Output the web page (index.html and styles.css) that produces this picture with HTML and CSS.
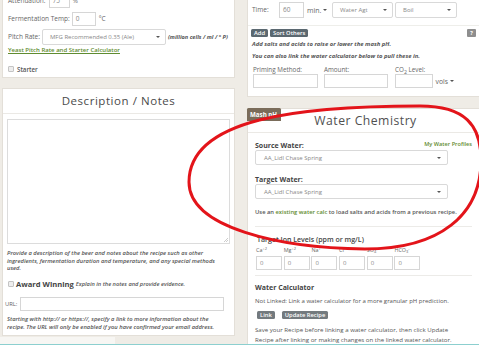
FILE: index.html
```html
<!DOCTYPE html>
<html lang="en">
<head>
<meta charset="utf-8">
<title>Recipe Editor</title>
<link rel="stylesheet" href="styles.css">
</head>
<body>
<div class="page">
  <div class="cols">
    <div class="col left">
      <section class="panel ferment">
        <div class="row r1"><span class="lbl">Attenuation:</span><span class="inp w21">75</span><span class="lbl">%</span></div>
        <div class="row r2"><span class="lbl">Fermentation Temp:</span><span class="inp w24">0</span><span class="lbl">°C</span></div>
        <div class="row r3"><span class="lbl">Pitch Rate:</span><span class="sel w124"><span>MFG Recommended 0.35 (Ale)</span><i class="caret"></i></span><em class="unit">(million cells / ml / ° P)</em></div>
        <a class="glink calc">Yeast Pitch Rate and Starter Calculator</a>
        <div class="check starter"><span class="box"></span><span>Starter</span></div>
      </section>
      <section class="panel desc">
        <h2 class="ph">Description / Notes</h2>
        <div class="pbody">
          <div class="textarea"><svg class="grip" width="5" height="5" viewBox="0 0 5 5"><path d="M1 5 L5 1 M3 5 L5 3" stroke="#aaa" stroke-width="0.6" fill="none"/></svg></div>
          <p class="help h1">Provide a description of the beer and notes about the recipe such as other<br>ingredients, fermentation duration and temperature, and any special methods<br>used.</p>
          <div class="award"><span class="box"></span><strong>Award Winning</strong><em>Explain in the notes and provide evidence.</em></div>
          <div class="urlrow"><span class="lbl">URL:</span><span class="inp url"></span></div>
          <p class="help h2">Starting with http:// or https://, specify a link to more information about the<br>recipe. The URL will only be enabled if you have confirmed your email address.</p>
        </div>
      </section>
      <div class="stub"></div>
    </div>
    <div class="col right">
      <section class="panel misc">
        <div class="row time">
          <span class="lbl tl">Time:</span><span class="inp w25">60</span><span class="drop min">min.<i class="caret"></i></span>
          <span class="sel w61"><span>Water Agt</span><i class="caret"></i></span>
          <span class="sel w62"><span>Boil</span><i class="caret"></i></span>
        </div>
        <div class="sep"></div>
        <div class="row btns">
          <span class="btn dark">Add</span><span class="btn dark">Sort Others</span><span class="qm">?</span>
        </div>
        <p class="note">Add salts and acids to raise or lower the mash pH.<br>You can also link the water calculator below to pull these in.</p>
        <div class="prime">
          <span class="lbl">Priming Method:</span><span class="lbl">Amount:</span><span class="lbl">CO<sub>2</sub> Level:</span>
          <span class="inp"></span><span class="inp"></span><span class="co2"><span class="inp w39"></span><span class="drop">vols<i class="caret"></i></span></span>
        </div>
      </section>
      <section class="panel water">
        <span class="tab">Mash pH</span>
        <h2 class="ph wh">Water Chemistry</h2>
        <div class="wbody">
          <div class="lrow"><strong class="flbl">Source Water:</strong><a class="glink prof">My Water Profiles</a></div>
          <span class="sel wide"><span>AA_Lidl Chase Spring</span><i class="caret"></i></span>
          <div class="lrow t2"><strong class="flbl">Target Water:</strong></div>
          <span class="sel wide"><span>AA_Lidl Chase Spring</span><i class="caret"></i></span>
          <p class="use">Use an <a class="glink">existing water calc</a> to load salts and acids from a previous recipe.</p>
          <div class="hr h-a"></div>
          <h3 class="sub ion">Target Ion Levels (ppm or mg/L)</h3>
          <div class="ions">
            <span class="il">Ca<sup>+2</sup></span><span class="il">Mg<sup>+2</sup></span><span class="il">Na<sup>+</sup></span><span class="il">Cl<sup>-</sup></span><span class="il">SO<sub>4</sub><sup>-2</sup></span><span class="il">HCO<sub>3</sub><sup>-</sup></span>
            <span class="inp">0</span><span class="inp">0</span><span class="inp">0</span><span class="inp">0</span><span class="inp">0</span><span class="inp">0</span>
          </div>
          <div class="hr h-b"></div>
          <h3 class="sub wc">Water Calculator</h3>
          <p class="nl">Not Linked: Link a water calculator for a more granular pH prediction.</p>
          <div class="row lbtns"><span class="btn light">Link</span><span class="btn light">Update Recipe</span></div>
          <p class="save">Save your Recipe before linking a water calculator, then click Update<br>Recipe after linking or making changes on the linked water calculator.</p>
        </div>
      </section>
    </div>
  </div>
  <div class="foot"></div>
  <svg class="annot" width="479" height="345" viewBox="0 0 479 345">
    <path d="M189 182 C189 118 300 106 420 106 C465 106 481 125 481 160 C481 215 440 249 365 249 C280 248 189 228 189 182 Z" fill="none" stroke="#e3141a" stroke-width="3"/>
  </svg>
</div>
</body>
</html>
```
FILE: styles.css
```css
* { box-sizing: border-box; margin: 0; padding: 0; }
html, body { width: 479px; height: 345px; overflow: hidden; }
body {
  background: #efece6;
  font-family: "Open Sans", sans-serif;
  font-size: 6.5px;
  color: #555;
}
.page { position: relative; height: 345px; overflow: hidden; }
.cols { display: flex; gap: 12px; padding-left: 2px; height: 344px; overflow: hidden; }
.col { display: flex; flex-direction: column; flex: none; }
.left { width: 233px; }
.right { width: 237px; }
.panel { background: #fff; border: 1px solid #e3dfd8; }

.row { display: flex; align-items: center; }
.lbl { color: #666; line-height: 8px; white-space: nowrap; }
.inp {
  display: block; height: 14px; border: 1px solid #d6d6d6; background: #fff;
  color: #888; line-height: 12px; padding-left: 3px; font-size: 6.5px;
}
.sel {
  display: flex; align-items: center; justify-content: space-between;
  height: 16px; border: 1px solid #d9d9d9; border-radius: 2px; background: #fff;
  color: #888; padding: 0 5px 0 7px; font-size: 6px; white-space: nowrap;
}
.caret {
  display: inline-block; width: 0; height: 0;
  border-left: 2px solid transparent; border-right: 2px solid transparent;
  border-top: 2.5px solid #555;
}
.glink { color: #5f8c30; font-weight: 600; text-decoration: none; }

/* left top panel */
.ferment { margin-top: -10px; padding: 3px 5px 4px; }
.r1 { height: 14px; }
.r1 .lbl:first-child { margin-right: 3px; }
.w21 { width: 21px; }
.r1 .inp + .lbl { margin-left: 3px; }
.r2 { height: 14px; margin-top: 4px; }
.r2 .lbl:first-child { margin-right: 2px; }
.w24 { width: 24px; }
.r2 .inp + .lbl { margin-left: 3px; }
.r3 { height: 16px; margin-top: 3px; }
.r3 .lbl { margin-right: 2px; }
.w124 { width: 124px; }
.unit { margin-left: 2px; font-size: 5.6px; font-weight: 700; color: #555; white-space: nowrap; }
.calc { display: block; margin-top: 1px; line-height: 8px; font-size: 6px; text-decoration: underline; }
.check { display: flex; align-items: center; }
.box {
  display: inline-block; width: 6px; height: 6px; border: 1px solid #c4c4c4;
  background: #eee; border-radius: 1px;
}
.starter { margin-top: 11px; height: 8px; font-weight: 600; color: #555; font-size: 6.2px; }
.starter .box { margin-right: 3px; }

/* description panel */
.desc { margin-top: 10px; height: 249px; }
.ph {
  height: 25px; line-height: 24px; border-bottom: 1px solid #ebe9e5;
  text-align: center; font-weight: 400; font-size: 11.5px; letter-spacing: 0.55px; color: #4a4a4a;
}
.pbody { padding: 5px 4px 0; }
.textarea { position: relative; height: 125px; border: 1px solid #dcdcdc; }
.grip { position: absolute; right: 1px; bottom: 1px; }
.help { font-size: 5.8px; font-style: italic; font-weight: 600; color: #555; white-space: nowrap; }
.h1 { margin-top: 6px; line-height: 7.5px; }
.award { display: flex; align-items: center; margin-top: 7px; height: 9px; padding-left: 1px; }
.award .box { margin-right: 2px; }
.award strong { font-size: 7.6px; font-weight: 700; color: #444; margin-right: 2px; }
.award em { font-size: 5.7px; font-weight: 600; color: #555; }
.urlrow { display: flex; align-items: center; margin-top: 8.5px; height: 14px; margin-left: -2px; }
.urlrow .lbl { font-size: 5.8px; width: 15px; }
.url { width: 204px; }
.h2 { margin-top: 4px; line-height: 8px; }
.stub { margin-top: 1px; margin-left: -2px; width: 115px; height: 7px; background: #f7f6f3; }

/* right top panel */
.misc { margin-top: -4px; padding: 5px 5px 8px; }
.time { height: 16px; }
.tl { width: 27px; margin-left: -1px; }
.w25 { width: 25px; height: 16px; line-height: 14px; }
.drop { display: inline-flex; align-items: center; gap: 2px; color: #666; font-size: 7px; white-space: nowrap; }
.min { width: 25px; margin-left: 3px; }
.w61 { width: 61px; }
.w62 { width: 62px; margin-left: 2px; }
.sep { margin-top: 7px; margin-left: -5px; margin-right: -5px; border-top: 1px solid #eeeeea; }
.btns { margin-top: 2px; height: 9px; margin-left: -2px; }
.btn {
  display: inline-block; height: 8px; line-height: 8px; padding: 0 3px; border-radius: 1.5px;
  color: #fff; font-size: 5.8px; font-weight: 600; margin-right: 2px; white-space: nowrap;
}
.dark { background: #5b6870; }
.light { background: #737a7e; }
.qm {
  margin-left: auto; margin-right: 2px; width: 9px; height: 8px; line-height: 8px; text-align: center;
  background: #8e8e8e; color: #fff; font-size: 5.5px; font-weight: 700; border-radius: 1px;
}
.note { margin-top: 1px; margin-left: -1px; line-height: 12px; font-size: 5.9px; font-style: italic; font-weight: 700; color: #555; white-space: nowrap; }
.prime {
  display: grid; grid-template-columns: 65px 64px 60px; column-gap: 6px;
  grid-template-rows: 8px 14px; margin-top: 4px;
}
.prime .lbl { line-height: 8px; font-size: 6.3px; }
.prime .inp { height: 14px; }
.prime .lbl:nth-child(3), .co2 { margin-left: 1px; }
.co2 { display: flex; align-items: center; gap: 3px; }
.w39 { width: 39px; }
.co2 .drop { font-size: 6.8px; }

/* water chemistry */
.water { position: relative; margin-top: 11px; flex: 1; }
.tab {
  position: absolute; left: -1px; top: -1px; width: 34px; height: 13px; line-height: 13px;
  background: #7a6c5a; color: #fff; font-size: 6.2px; font-weight: 700; padding-left: 3px;
  border-radius: 1.5px 1.5px 0 0; white-space: nowrap; overflow: hidden;
}
.wh { height: 24px; line-height: 23px; font-size: 12.2px; letter-spacing: 0.5px; color: #505050; }
.wbody { padding: 0 11px 0 7px; }
.lrow { display: flex; justify-content: space-between; align-items: center; height: 8px; margin-top: 8px; }
.lrow.t2 { margin-top: 10px; }
.flbl { font-size: 7px; font-weight: 700; color: #444; }
.prof { font-size: 5.6px; margin-top: -3px; }
.wide { width: 193px; height: 15px; margin-top: 1px; padding-left: 8px; padding-right: 6px; font-size: 6px; }
.use { margin-top: 9px; line-height: 8px; font-size: 5.8px; font-weight: 600; color: #555; white-space: nowrap; }
.use .glink { font-weight: 600; }
.hr { border-top: 1px solid #ecebe8; }
.h-a { margin-top: 9.5px; }
.sub { font-size: 7px; font-weight: 700; color: #444; line-height: 9px; }
.ion { margin-top: 8px; padding-left: 2px; font-weight: 600; }
.ions {
  display: grid; grid-template-columns: repeat(6, 26px); column-gap: 1.7px;
  grid-template-rows: 8px 14px; row-gap: 3px; margin-top: 1.5px; padding-left: 1px;
}
.il { font-size: 5.4px; color: #666; line-height: 8px; white-space: nowrap; }
.il sup { font-size: 4px; vertical-align: 2px; }
.il sub { font-size: 4px; vertical-align: -1px; }
.ions .inp { font-size: 6px; }
.h-b { margin-top: 5px; }
.wc { margin-top: 8px; line-height: 8px; }
.nl { margin-top: 5px; line-height: 8px; font-size: 6px; color: #555; white-space: nowrap; }
.lbtns { margin-top: 6px; height: 8px; padding-left: 2px; }
.lbtns .btn { margin-right: 7px; }
.save { margin-top: 6px; line-height: 10px; font-size: 6.1px; color: #555; white-space: nowrap; }

.foot { height: 1px; background: #8ccfcf; }
.annot { position: absolute; left: 0; top: 0; pointer-events: none; }
```
